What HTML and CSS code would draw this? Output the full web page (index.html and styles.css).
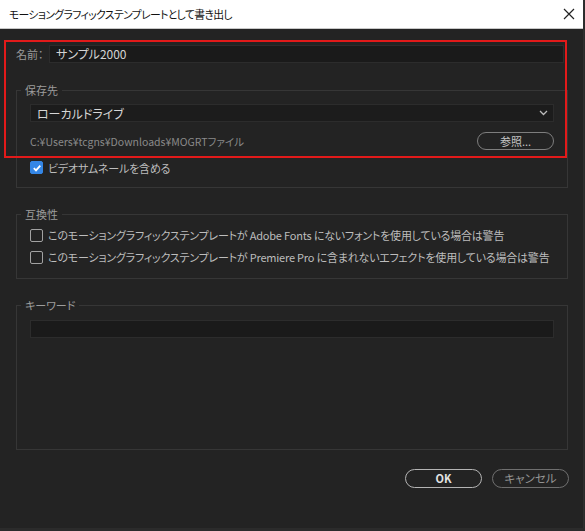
FILE: index.html
```html
<!DOCTYPE html>
<html lang="ja">
<head>
<meta charset="utf-8">
<link rel="stylesheet" href="styles.css">
</head>
<body>
<div class="window">
  <div class="titlebar">
    <span class="title">モーショングラフィックステンプレートとして書き出し</span>
    <svg class="close" width="12" height="12" viewBox="0 0 12 12"><path d="M1 1L11 11M11 1L1 11" stroke="#222" stroke-width="1.2" fill="none"/></svg>
  </div>
  <div class="content">
    <div class="name-row">
      <span class="label">名前：</span>
      <div class="input name-input">サンプル2000</div>
    </div>

    <fieldset class="group dest">
      <legend>保存先</legend>
      <div class="select">
        <span>ローカルドライブ</span>
        <svg width="9" height="6" viewBox="0 0 9 6"><path d="M1 1L4.5 4.5L8 1" stroke="#bbb" stroke-width="1.3" fill="none"/></svg>
      </div>
      <div class="path-row">
        <span class="path">C:¥Users¥tcgns¥Downloads¥MOGRTファイル</span>
        <button class="pill browse">参照...</button>
      </div>
      <label class="check-row">
        <span class="box checked"><svg width="10" height="10" viewBox="0 0 10 10"><path d="M1.8 5.2L4 7.4L8.3 2.6" stroke="#fff" stroke-width="1.8" fill="none"/></svg></span>
        <span class="check-text">ビデオサムネールを含める</span>
      </label>
    </fieldset>

    <fieldset class="group compat">
      <legend>互換性</legend>
      <label class="check-row tall">
        <span class="box"></span>
        <span class="check-text">このモーショングラフィックステンプレートが Adobe Fonts にないフォントを使用している場合は警告</span>
      </label>
      <label class="check-row tall">
        <span class="box"></span>
        <span class="check-text">このモーショングラフィックステンプレートが Premiere Pro に含まれないエフェクトを使用している場合は警告</span>
      </label>
    </fieldset>

    <fieldset class="group keyword">
      <legend>キーワード</legend>
      <div class="input kw-input"></div>
    </fieldset>

    <div class="actions">
      <button class="pill ok">OK</button>
      <button class="pill cancel">キャンセル</button>
    </div>
  </div>
  <div class="highlight"></div>
</div>
</body>
</html>
```

FILE: styles.css
```css
html, body {
  margin: 0;
  padding: 0;
}
body {
  background: #2b2b2b;
  width: 585px;
  height: 531px;
  overflow: hidden;
  font-family: "Noto Sans CJK JP", "Noto Sans", sans-serif;
  font-feature-settings: "palt";
}
.window {
  position: relative;
  width: 583px;
  height: 528px;
  background: #232323;
  border-right: 1px solid #2f2f2f;
}
.titlebar {
  height: 29px;
  background: #ffffff;
  border-bottom: 1px solid #c8c8c8;
  box-sizing: border-box;
  display: flex;
  align-items: center;
  justify-content: space-between;
  padding: 0 8px 0 9px;
}
.title {
  font-size: 10.8px;
  color: #111;
  letter-spacing: -0.6px;
}
.content {
  display: flex;
  flex-direction: column;
  padding: 0 15px 0 16px;
}
.name-row {
  display: flex;
  align-items: center;
  margin-top: 16px;
  margin-right: 4px;
}
.label {
  font-size: 11px;
  color: #9a9a9a;
  width: 33px;
}
.input {
  background: #1a1a1a;
  border: 1px solid #2c2c2c;
  box-sizing: border-box;
  height: 18px;
}
.name-input {
  flex: 1;
  color: #d4d4d4;
  font-size: 12px;
  line-height: 16px;
  padding-left: 6px;
}
.group {
  margin: 0;
  border: 1px solid #363636;
  padding: 0 13px;
  min-width: 0;
}
.group legend {
  font-size: 11px;
  line-height: 14px;
  color: #9c9c9c;
  padding: 0 4px;
  margin-left: -9px;
}
.dest {
  margin-top: 20px;
  padding-top: 7px;
  padding-bottom: 13px;
}
.select {
  height: 18px;
  background: #1c1c1c;
  border: 1px solid #2c2c2c;
  box-sizing: border-box;
  display: flex;
  align-items: center;
  justify-content: space-between;
  padding: 0 5px 0 6px;
  color: #d6d6d6;
  font-size: 12px;
}
.path-row {
  display: flex;
  align-items: center;
  justify-content: space-between;
  margin-top: 10px;
}
.path {
  color: #8a8a8a;
  font-size: 10.5px;
  letter-spacing: 0;
}
.pill {
  font-family: inherit;
  font-feature-settings: "palt";
  background: transparent;
  border-radius: 10px;
  height: 19px;
  width: 77px;
  padding: 0;
  font-size: 11px;
  line-height: 15px;
  box-sizing: border-box;
}
.browse {
  border: 1.5px solid #7e7e7e;
  color: #c4c4c4;
  height: 18px;
}
.check-row {
  display: flex;
  align-items: center;
  height: 13px;
  margin-top: 11px;
}
.check-row.tall {
  height: 22px;
  margin-top: 0;
}
.box {
  width: 13px;
  height: 13px;
  box-sizing: border-box;
  border: 1.5px solid #a2a2a2;
  border-radius: 2px;
  display: flex;
  align-items: center;
  justify-content: center;
  flex: none;
}
.box.checked {
  background: #3486e6;
  border-color: #3486e6;
}
.check-text {
  margin-left: 5px;
  font-size: 11px;
  color: #bdbdbd;
  white-space: nowrap;
  letter-spacing: -0.2px;
}
.compat {
  margin-top: 19px;
  padding-top: 3px;
  padding-bottom: 10px;
}
.keyword {
  margin-top: 19px;
  padding-top: 8px;
  padding-bottom: 111px;
}
.kw-input {
  height: 18px;
}
.actions {
  display: flex;
  justify-content: flex-end;
  gap: 10px;
  margin-top: 19px;
  margin-right: -1px;
}
.ok {
  border: 1.5px solid #b4b4b4;
  color: #e2e2e2;
  font-weight: 600;
}
.cancel {
  border: 1.5px solid #6f6f6f;
  color: #949494;
  font-size: 11.5px;
}
.highlight {
  position: absolute;
  left: 4px;
  top: 40px;
  width: 563px;
  height: 118px;
  box-sizing: border-box;
  border: 2px solid #e21a1a;
  pointer-events: none;
}
```
